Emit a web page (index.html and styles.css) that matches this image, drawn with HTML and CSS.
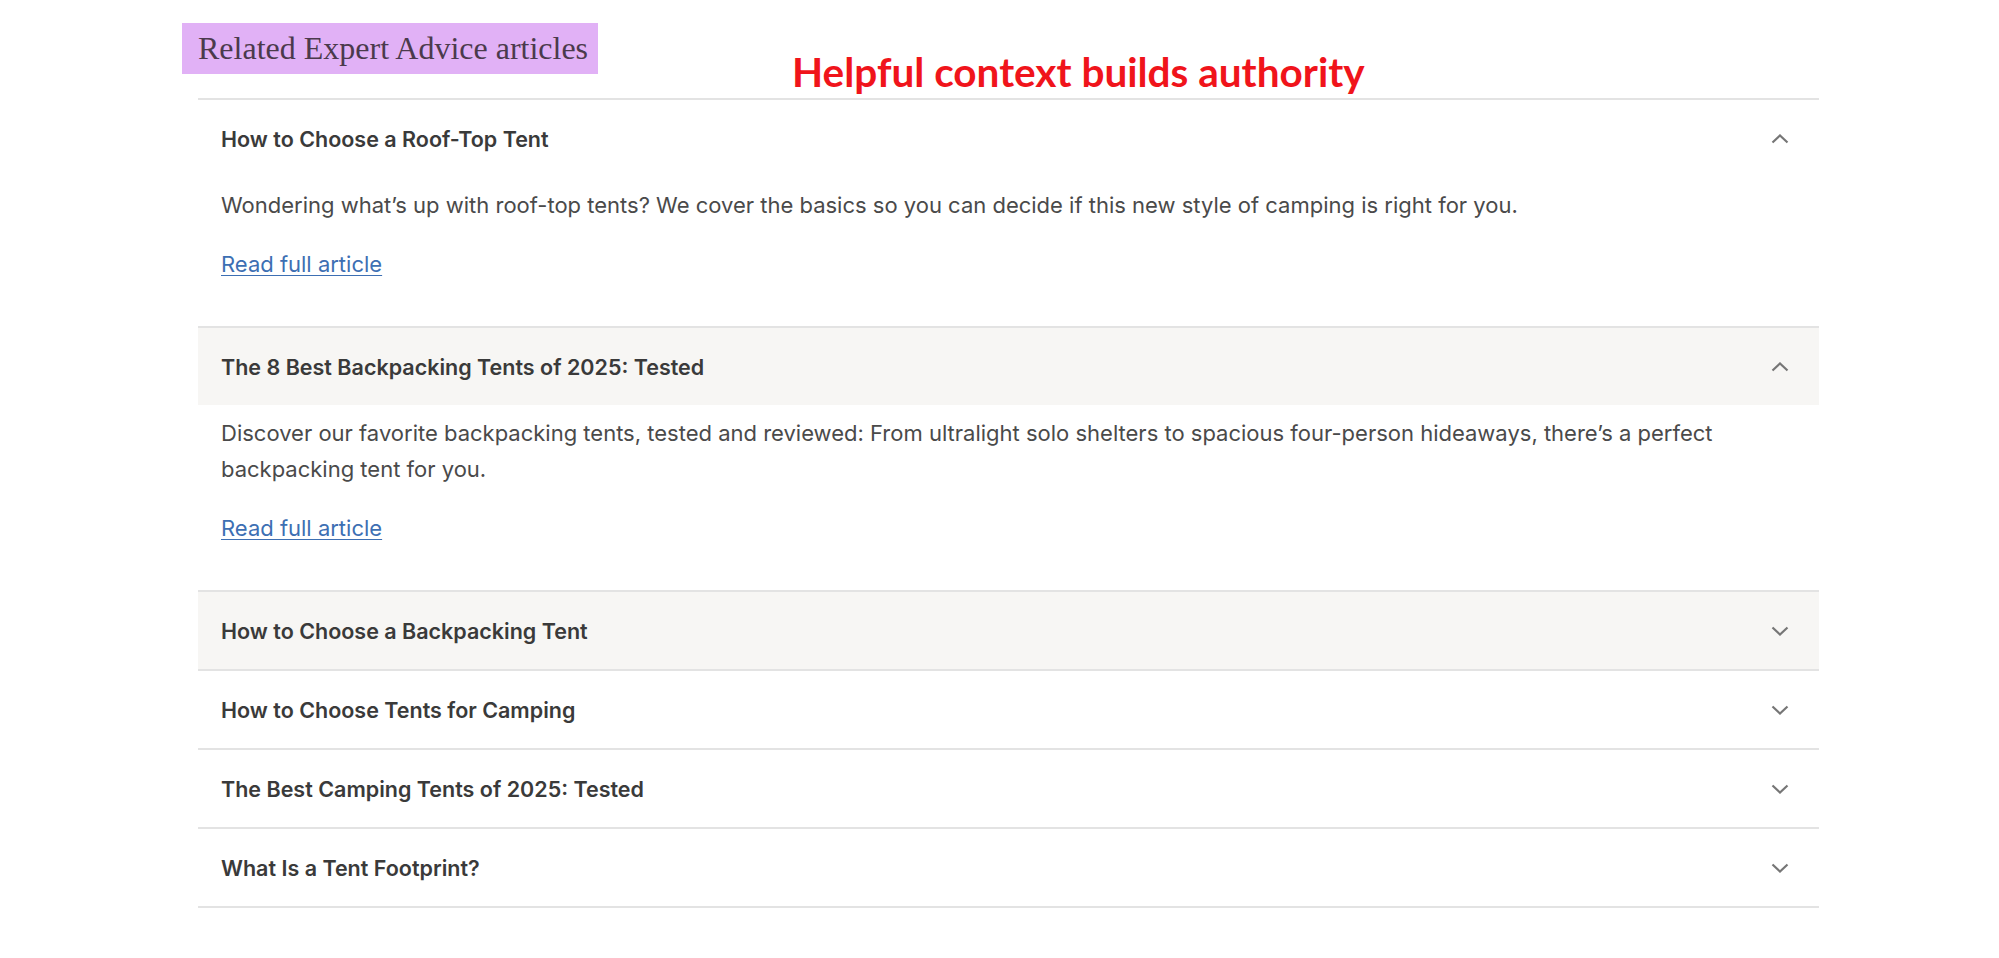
FILE: index.html
```html
<!DOCTYPE html>
<html lang="en">
<head>
  <meta charset="UTF-8">
  <meta name="viewport" content="width=device-width, initial-scale=1.0">
  <title>Related Expert Advice articles</title>
  <link rel="stylesheet" href="styles.css">
</head>
<body>

<div class="page">
  <div class="top">
    <h2 class="label">Related Expert Advice articles</h2>
    <div class="note">Helpful context builds authority</div>
  </div>

  <div class="list">

    <div class="item open">
      <div class="head">
        <span>How to Choose a Roof-Top Tent</span>
        <svg class="chev" viewBox="0 0 18 10"><path d="M1.5 8.5 L9 1.5 L16.5 8.5"/></svg>
      </div>
      <div class="panel">
        <p>Wondering what&#8217;s up with roof-top tents? We cover the basics so you can decide if this new style of camping is right for you.</p>
        <a href="#">Read full article</a>
      </div>
    </div>

    <div class="item open">
      <div class="head grey">
        <span>The 8 Best Backpacking Tents of 2025: Tested</span>
        <svg class="chev" viewBox="0 0 18 10"><path d="M1.5 8.5 L9 1.5 L16.5 8.5"/></svg>
      </div>
      <div class="panel">
        <p>Discover our favorite backpacking tents, tested and reviewed: From ultralight solo shelters to spacious four-person hideaways, there&#8217;s a perfect backpacking tent for you.</p>
        <a href="#">Read full article</a>
      </div>
    </div>

    <div class="item">
      <div class="head grey">
        <span>How to Choose a Backpacking Tent</span>
        <svg class="chev" viewBox="0 0 18 10"><path d="M1.5 1.5 L9 8.5 L16.5 1.5"/></svg>
      </div>
    </div>

    <div class="item">
      <div class="head">
        <span>How to Choose Tents for Camping</span>
        <svg class="chev" viewBox="0 0 18 10"><path d="M1.5 1.5 L9 8.5 L16.5 1.5"/></svg>
      </div>
    </div>

    <div class="item">
      <div class="head">
        <span>The Best Camping Tents of 2025: Tested</span>
        <svg class="chev" viewBox="0 0 18 10"><path d="M1.5 1.5 L9 8.5 L16.5 1.5"/></svg>
      </div>
    </div>

    <div class="item">
      <div class="head">
        <span>What Is a Tent Footprint?</span>
        <svg class="chev" viewBox="0 0 18 10"><path d="M1.5 1.5 L9 8.5 L16.5 1.5"/></svg>
      </div>
    </div>

  </div>
</div>

</body>
</html>
```

FILE: styles.css
```css
body {
  margin: 0;
  background: #fff;
  font-family: 'Inter', 'Roboto', sans-serif;
  color: #3b3b3b;
}

.page {
  width: 1621px;
  margin-left: 198px;
}

.top {
  height: 98px;
  display: flex;
  align-items: flex-start;
}

.label {
  margin: 23px 0 0 -16px;
  height: 51px;
  width: 416px;
  box-sizing: border-box;
  padding-left: 16px;
  background: #e1b1f6;
  font-family: 'Liberation Serif', serif;
  font-weight: 400;
  font-size: 32px;
  line-height: 50px;
  color: #4b3a4c;
  white-space: nowrap;
}

.note {
  margin: 49px 0 0 194px;
  font-family: 'Lato', sans-serif;
  font-weight: 700;
  font-size: 40.5px;
  line-height: 46px;
  color: #f0141b;
}

.list {
  border-top: 2px solid #e3e3e3;
}

.item {
  border-bottom: 2px solid #e3e3e3;
}

.head {
  height: 77px;
  padding: 0 30px 0 23px;
  display: flex;
  align-items: center;
  justify-content: space-between;
  font-size: 21.5px;
  font-weight: 600;
  color: #3a3a3a;
}

.head.grey {
  background: #f7f6f4;
}

.chev {
  width: 18px;
  height: 10px;
  fill: none;
  stroke: #767676;
  stroke-width: 2.2;
}

.panel {
  padding: 10px 23px 44px;
}

.panel p {
  margin: 0 0 23px;
  font-size: 22px;
  line-height: 36px;
  color: #4a4a4a;
}

.panel a {
  font-size: 22px;
  line-height: 36px;
  color: #3d6fb3;
  text-decoration: underline;
  text-decoration-thickness: 1px;
  text-underline-offset: 3px;
}
```
